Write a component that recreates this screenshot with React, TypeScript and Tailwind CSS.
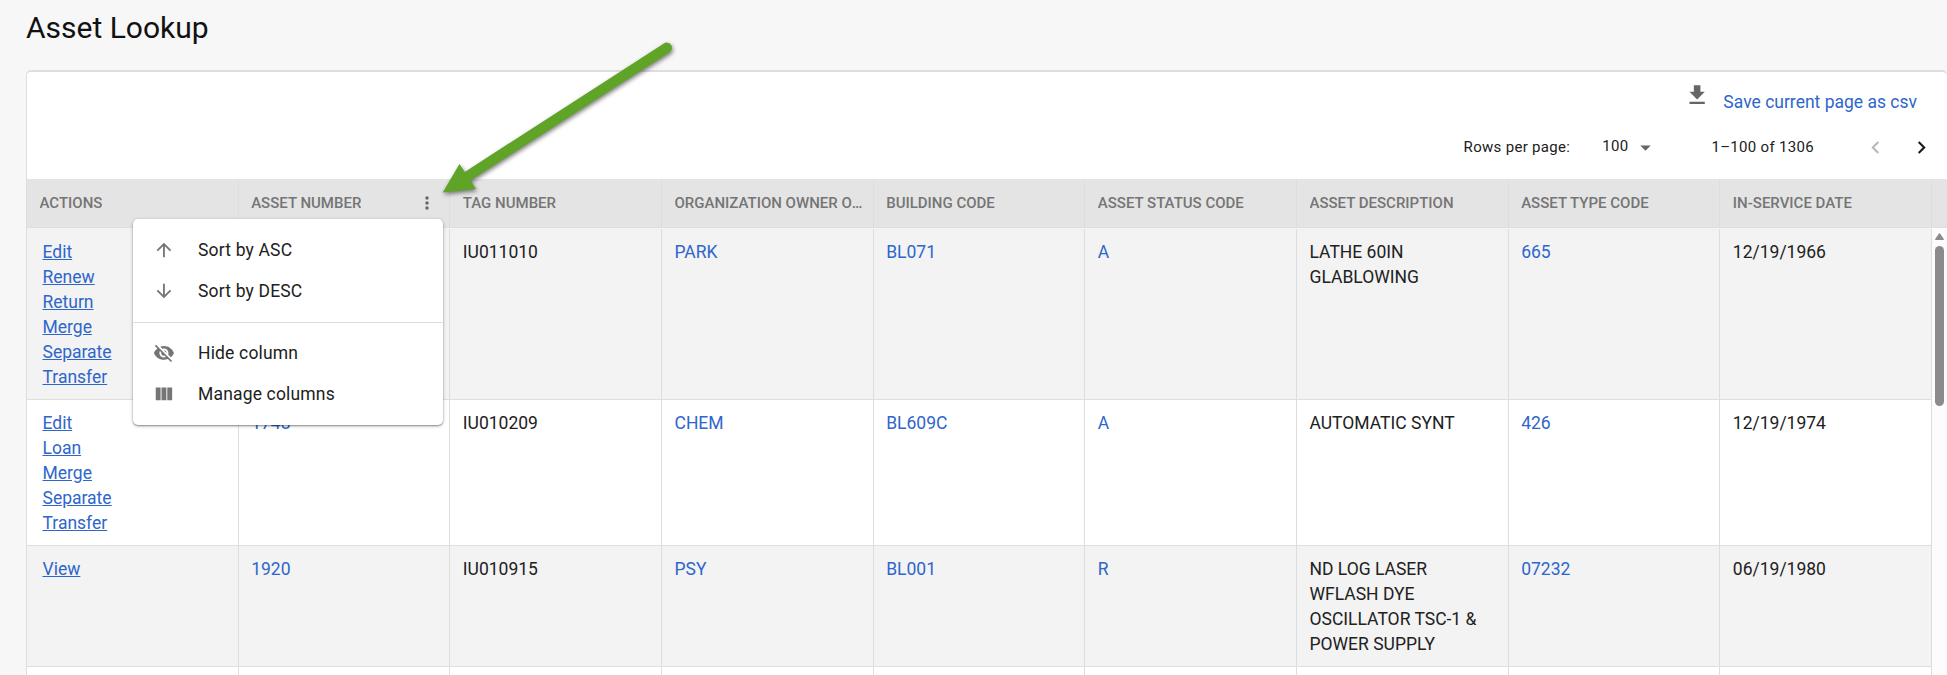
import React from 'react';
import {
  MdArrowDownward,
  MdArrowDropDown,
  MdArrowUpward,
  MdChevronLeft,
  MdChevronRight,
  MdGetApp,
  MdMoreVert,
  MdViewColumn,
  MdVisibilityOff,
} from 'react-icons/md';

interface Asset {
  actions: string[];
  values: string[];
}

const COLUMNS = [
  'Actions',
  'Asset Number',
  'Tag Number',
  'Organization Owner Org',
  'Building Code',
  'Asset Status Code',
  'Asset Description',
  'Asset Type Code',
  'In-Service Date',
];

// Value columns that link to a lookup record
const LINKED = [0, 2, 3, 4, 6];

const ASSETS: Asset[] = [
  {
    actions: ['Edit', 'Renew', 'Return', 'Merge', 'Separate', 'Transfer'],
    values: ['', 'IU011010', 'PARK', 'BL071', 'A', 'LATHE 60IN GLABLOWING', '665', '12/19/1966'],
  },
  {
    actions: ['Edit', 'Loan', 'Merge', 'Separate', 'Transfer'],
    values: ['1748', 'IU010209', 'CHEM', 'BL609C', 'A', 'AUTOMATIC SYNT', '426', '12/19/1974'],
  },
  {
    actions: ['View'],
    values: ['1920', 'IU010915', 'PSY', 'BL001', 'R', 'ND LOG LASER WFLASH DYE OSCILLATOR TSC-1 & POWER SUPPLY', '07232', '06/19/1980'],
  },
  { actions: [], values: ['', '', '', '', '', '', '', ''] },
];

const GRID = 'grid grid-cols-[repeat(9,minmax(0,1fr))] w-[1905px] shrink-0';

const Toolbar: React.FC = () => (
  <div className="h-[107px] flex flex-col items-end">
    <div className="flex items-start pt-[10px] pr-[30px]">
      <MdGetApp className="w-[26.25px] h-[26.25px] text-[#666]" />
      <a href="#" className="ml-[13px] mt-[8px] leading-[25px] text-[#2e66cb]">
        Save current page as csv
      </a>
    </div>
    <div className="flex items-center h-[30px] mt-[17px] pr-[13px] text-[15px] tracking-[0.31px]">
      <span>Rows per page:</span>
      <span className="ml-[32px] -mt-[2px]">100</span>
      <MdArrowDropDown className="ml-[5px] w-[25px] h-[25px] text-[#666]" />
      <span className="ml-[53px]">1–100 of 1306</span>
      <MdChevronLeft className="ml-[49px] w-[25px] h-[25px] text-[#b8b8b8]" />
      <MdChevronRight className="ml-[21px] w-[25px] h-[25px] text-[#1a1a1a]" />
    </div>
  </div>
);

const HeaderRow: React.FC = () => (
  <div className="flex h-[49px] bg-[#e4e4e4] border-b border-[#dedede]">
    <div className={GRID}>
      {COLUMNS.map((name) => (
        <div key={name} className="flex items-center justify-between border-r border-[#dedede] pl-[12.5px] pr-[10px]">
          <span className="truncate uppercase text-[15px] font-medium text-[#757575]">{name}</span>
          {name === 'Asset Number' && <MdMoreVert className="w-5 h-5 mr-[2px] shrink-0 text-[#666]" />}
        </div>
      ))}
    </div>
  </div>
);

const AssetRow: React.FC<{ asset: Asset }> = ({ asset }) => (
  <div className={`${GRID} border-b border-[#dedede] odd:bg-[#f3f3f3] even:bg-white first:pt-px min-h-10`}>
    <div className="flex flex-col items-start border-r border-[#dedede] pl-[15.5px] pt-[11px] pb-[9px]">
      {asset.actions.map((action) => (
        <a key={action} href="#" className="leading-[25px] underline text-[#2e66cb]">
          {action}
        </a>
      ))}
    </div>
    {asset.values.map((value, i) => (
      <div
        key={i}
        className={`border-r border-[#dedede] px-[12.5px] pt-[11px] pb-[9px] leading-[25px] ${LINKED.includes(i) ? 'text-[#2e66cb]' : ''}`}
      >
        {value}
      </div>
    ))}
  </div>
);

const MenuItem: React.FC<{ icon: React.ReactNode; label: string }> = ({ icon, label }) => (
  <div className="flex items-center h-[41.25px] px-5">
    <span className="w-[45px] text-[21.875px] text-[#757575]">{icon}</span>
    {label}
  </div>
);

const ColumnMenu: React.FC = () => (
  <div className="absolute left-[133px] top-[219px] w-[310px] h-[206px] py-[10px] rounded-[5px] bg-white tracking-[0.17px] shadow-[0_1px_2px_rgba(0,0,0,0.4),0_1px_4px_rgba(0,0,0,0.15)]">
    <MenuItem icon={<MdArrowUpward />} label="Sort by ASC" />
    <MenuItem icon={<MdArrowDownward />} label="Sort by DESC" />
    <div className="h-px bg-[#dedede] my-[10px]" />
    <MenuItem icon={<MdVisibilityOff />} label="Hide column" />
    <MenuItem icon={<MdViewColumn />} label="Manage columns" />
  </div>
);

// Callout pointing at the column menu button
const Pointer: React.FC = () => (
  <svg
    className="absolute left-[435px] top-[30px] drop-shadow-[1px_2px_2px_rgba(0,0,0,0.5)]"
    width="250"
    height="180"
    viewBox="435 30 250 180"
  >
    <path d="M468 176L666.7 47.8" stroke="#5fa327" strokeWidth="10.4" strokeLinecap="round" />
    <path d="M442.7 192.5L459.5 164L476 189Z" fill="#5fa327" />
  </svg>
);

const Scrollbar: React.FC = () => (
  <div className="flex flex-col items-center w-[15px] pt-[5px] pr-px bg-[#fcfcfc]">
    <svg width="9" height="7" viewBox="0 0 9 7">
      <path d="M4.5 .8L8.3 6.3H.7Z" fill="#8b8b8b" stroke="#8b8b8b" strokeWidth="1.2" strokeLinejoin="round" />
    </svg>
    <div className="w-[9px] h-[160px] mt-[6px] rounded-full bg-[#8b8b8b]" />
  </div>
);

const App: React.FC = () => {
  return (
    <div className="relative w-[1947px] h-[675px] overflow-hidden bg-[#f7f7f7] pl-[26px] font-[Roboto,sans-serif] text-[17.5px] text-[#212121]">
      <h1 className="h-[70px] pt-[8px] text-[30px] leading-[40px] text-[#111]">Asset Lookup</h1>
      <div className="flex flex-col h-[605px] overflow-hidden bg-white rounded-t-[5px] border-t-2 border-l border-[#dedede]">
        <Toolbar />
        <HeaderRow />
        <div className="flex flex-1 min-h-0">
          <div className="w-[1905px]">
            {ASSETS.map((asset, i) => (
              <AssetRow key={i} asset={asset} />
            ))}
          </div>
          <Scrollbar />
        </div>
      </div>
      <ColumnMenu />
      <Pointer />
    </div>
  );
};

export default App;
